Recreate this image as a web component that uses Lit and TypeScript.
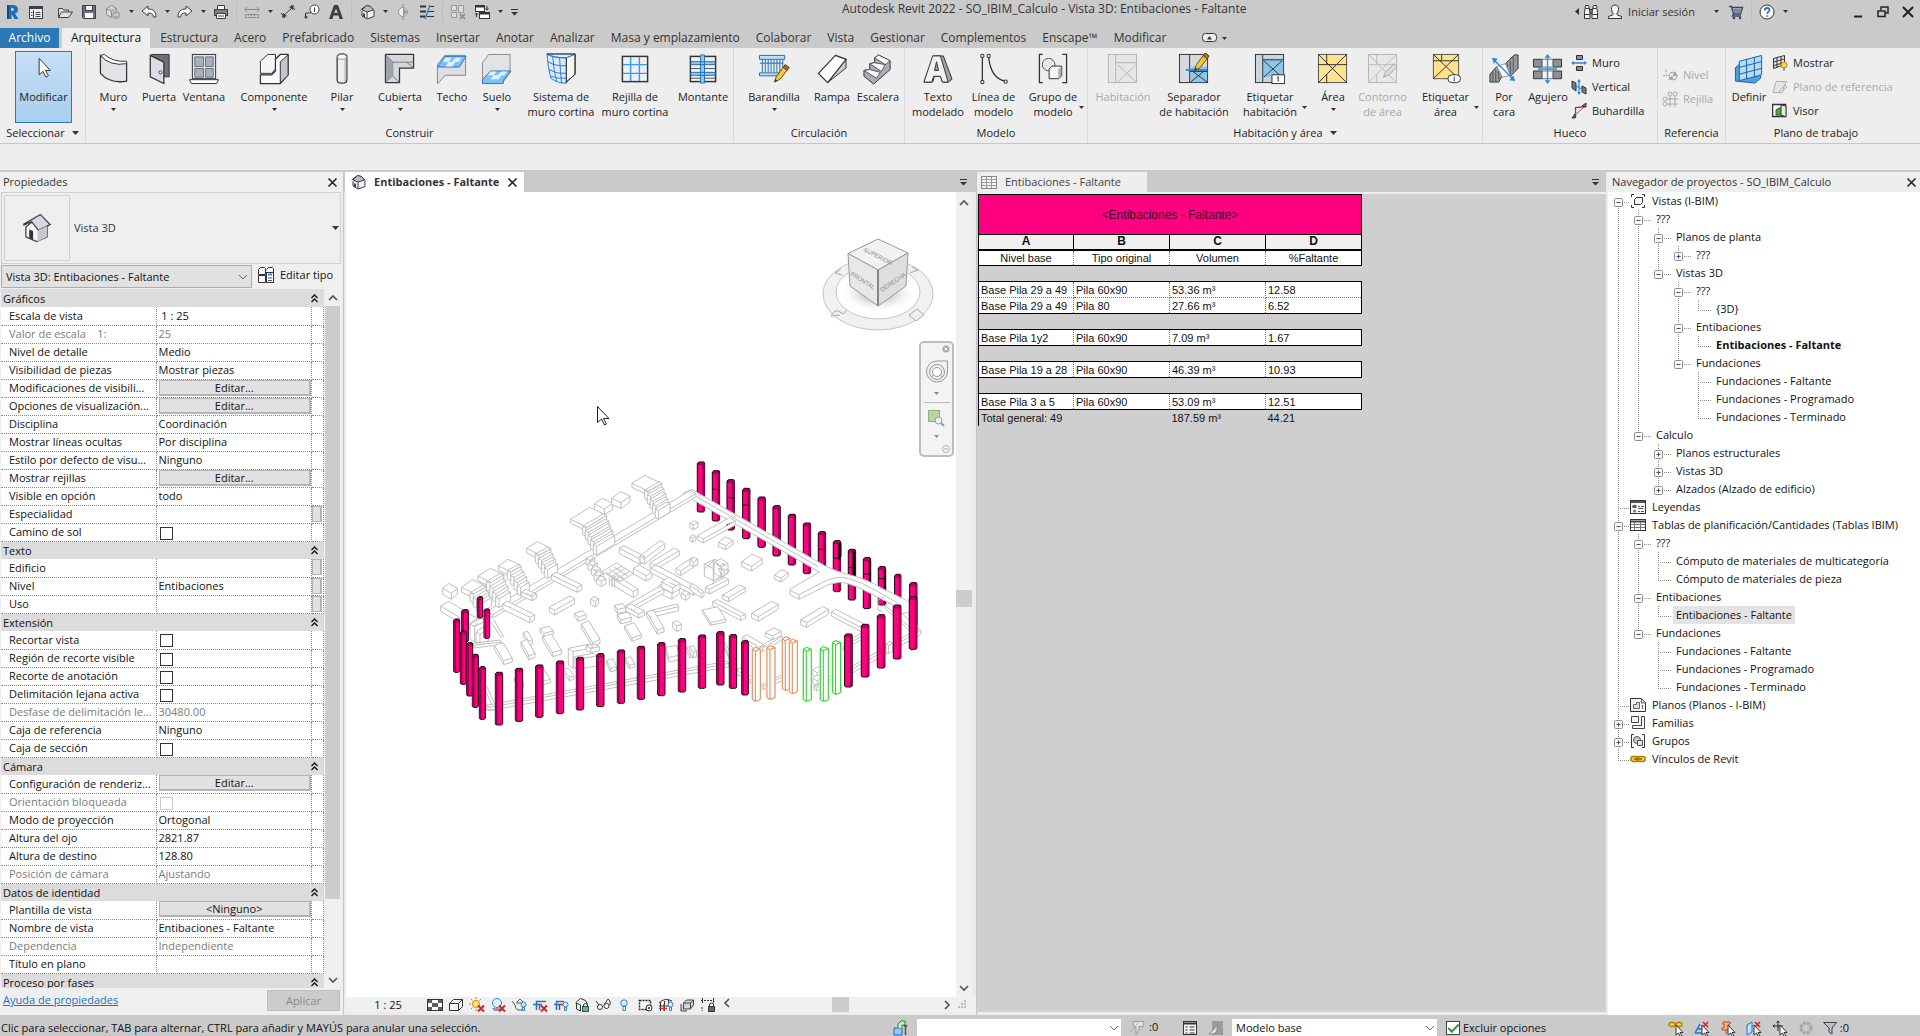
import { LitElement, html, svg, css, nothing, SVGTemplateResult } from "lit";
import { customElement, state } from "lit/decorators.js";
import { classMap } from "lit/directives/class-map.js";

type Art = SVGTemplateResult;

/* ---------- shared drawing pieces ---------- */

const pencil = svg`<path d="M17 30l2-6 9-12 4 3-9 12z" fill="#f7c832" stroke="#5c4a1c"/><path d="M26 15l2-3 4 3-2 3z" fill="#b9633f" stroke="#5c4a1c"/><path d="M17 30l1-3 2 2z" fill="#333"/>`;
const roomBox = (fill: string, line: string) => svg`<rect x="1.500" y="1.500" width="29" height="29" fill="${fill}" stroke="${line}"/>`;
const redX = svg`<path d="M9 8.500l6 6m0-6l-6 6" stroke="#d3222a" stroke-width="2" fill="none"/>`;
const pointer = svg`<path d="M8 5v10l2.500-2 2 4 1.500-1-2-3.500h3z" fill="#fff" stroke="#333"/>`;
const bulb = svg`<circle cx="12.500" cy="7.500" r="2.500" fill="#d9efff" stroke="#2482cf"/><path d="M11.500 10.500h2v3h-2z" fill="#fff" stroke="#2482cf"/>`;
const areaLines = (c: string) => svg`<path d="M1 12h30M10 1v11M1 1l30 30M31 1L1 31M10 31v-9" stroke="${c}" fill="none"/>`;

const ART: Record<string, Art> = {
  logo: svg`<path d="M3 1h6q5 0 5 4.500 0 3-3 4l3.500 5.500h-4L7.500 10v5H3z" fill="#1c6fb8"/><path d="M7 4h1.500q1.500 0 1.500 1.500T8.500 7H7z" fill="#cacaca"/><path d="M3 1l2 1v12l-2 1z" fill="#0d4a86"/>`,
  recent: svg`<rect x="1.500" y="2.500" width="13" height="12" fill="#f4f4f4" stroke="#3c4046"/><path d="M2 4h12" stroke="#3c4046" stroke-width="2"/><path d="M5.500 6v8M7.500 8.500h5M7.500 10.500h5M7.500 12.500h5M3 8.500h1.500M3 11.500h1.500" stroke="#3c4046"/>`,
  open: svg`<path d="M1.500 13.500v-9h4l1 1.500h5v2M1.500 13.500l3-5.500h11l-4 5.500z" fill="#e4e4e6" stroke="#3c4046"/>`,
  save: svg`<path d="M1.500 1.500h13v13h-12l-1-1z" fill="#6c7078" stroke="#3c4046"/><rect x="4.500" y="1.500" width="7" height="5" fill="#f3f3f3" stroke="#3c4046"/><rect x="4" y="9" width="8" height="5" fill="#fafafa"/>`,
  sync: svg`<path d="M1.500 4.500l5-3 5 3v6l-5 3-5-3zM1.500 4.500l5 3 5-3M6.500 7.500v6" fill="#dadada" stroke="#8a8a8a"/><circle cx="11" cy="11" r="4" fill="#a9a9a9"/><path d="M9 11h4m-1.500-1.500L13 11" stroke="#eee" fill="none"/>`,
  undo: svg`<path d="M1 7l6-5v3c5 0 8 2 8 8h-2.500c-.5-3-2-4-5.500-4v3z" fill="#f6f6f6" stroke="#3c4046"/>`,
  redo: svg`<path d="M15 7L9 2v3C4 5 1 7 1 13h2.500c.5-3 2-4 5.500-4v3z" fill="#f6f6f6" stroke="#3c4046"/>`,
  print: svg`<path d="M4.500 6V1.500h7V6" fill="#fff" stroke="#3c4046"/><rect x="1.500" y="5.500" width="13" height="6" fill="#7b8088" stroke="#3c4046"/><path d="M3.500 9.500h9v5h-9z" fill="#fff" stroke="#3c4046"/><path d="M5 12h6" stroke="#3c4046"/>`,
  measure: svg`<path d="M1 5.500h14M3 3L1 5.500 3 8M13 3l2 2.500L13 8M1.500 10.500h13v3h-13zM4.500 10v2M7.500 10v2M10.500 10v2" stroke="#8d8d8d" fill="none"/>`,
  dim: svg`<path d="M3 12L13 3M1 9l4 5M11 1l4 5" stroke="#3c4046" fill="none"/><path d="M2 14l1-5 4 3zM14 1l-5 2 4 3z" fill="#3c4046"/>`,
  tag: svg`<circle cx="10.500" cy="5.500" r="4.500" fill="#fff" stroke="#3c4046"/><path d="M10.500 3.500v4.500M1.500 14v-5h4l2-1" stroke="#3c4046" fill="none"/><circle cx="2" cy="13" r="1.500" fill="#3c4046"/>`,
  textA: svg`<path fill-rule="evenodd" d="M6 1h4l5 14h-3.500l-1-3.500h-5L4.500 15H1zM8 4.500L6.300 9h3.400z" fill="#3c4046"/>`,
  house: svg`<path d="M1.500 6l6-4.500 4 1 3.500 4v6l-7 2.500-5-3V7" fill="#f3f3f6" stroke="#3c4046"/><path d="M7.500 1.500L3 6l5 2 6.500-2-3-3.500zM8 8v6.500" fill="#b9bcc4" stroke="#3c4046"/><path d="M4 9l2 1v3.500L4 12.500z" fill="#3c4046"/>`,
  section: svg`<circle cx="8" cy="8" r="4.500" fill="#eee" stroke="#999"/><path d="M8 0v3M8 13v3" stroke="#888"/><path d="M8 3.500L12.500 8 8 12.500z" fill="#999"/>`,
  thin: svg`<path d="M1 2.500h6M1 7.500h6M1 12.500h6" stroke="#333" stroke-width="2"/><path d="M10 2.500h5M9 7.500h6M8 12.500h7" stroke="#333"/><path d="M11 1L6 15" stroke="#2b8ae2" stroke-width="1.500"/>`,
  closeWin: svg`<path d="M1.500 1.500h5v5h-5zM8.500 1.500h5v7h-5zM1.500 8.500h5v5h-5z" fill="#ddd" stroke="#999"/><path d="M10 10l5 5m0-5l-5 5" stroke="#888" stroke-width="1.500"/>`,
  switchWin: svg`<rect x="1.500" y="1.500" width="9" height="6" fill="#fff" stroke="#333"/><path d="M2 2.500h8" stroke="#333" stroke-width="2"/><rect x="5.500" y="8.500" width="10" height="6" fill="#fff" stroke="#333"/><path d="M6 9.500h9" stroke="#333" stroke-width="2"/><path d="M13 2v4m-1.500-1.500L13 6l1.500-1.500M2.500 13V9M1 10.500L2.500 9 4 10.500" stroke="#333" fill="none"/>`,
  binoc: svg`<path d="M2.500 1.500h3l1.500 6v7H1.500v-6zM10.500 1.500h3l1 7v6H9v-7zM7 5.500h2v4H7z" fill="#f4f4f4" stroke="#333"/><path d="M2 10.500h4.500M9.500 10.500h4.500M3 4.500h3M10 4.500h3" stroke="#333"/>`,
  user: svg`<path d="M8 1q4 0 3.500 4.500Q11 9 9.500 10q0 1 5 2.500v2h-13v-2q5-1.500 5-2.500Q5 9 4.500 5.500 4 1 8 1z" fill="#f6f6f6" stroke="#333"/>`,
  cart: svg`<path d="M1 2.500h2.500L5.500 10h7l2-6.500H4M5.500 10l-1 2h8.500" stroke="#3b4660" fill="none" stroke-width="1.400"/><path d="M5 5h8.500l-1 4H6z" fill="#7f8aa5"/><circle cx="6" cy="14" r="1.300" fill="#3b4660"/><circle cx="12" cy="14" r="1.300" fill="#3b4660"/>`,
  help: svg`<circle cx="8" cy="8" r="7" fill="#fff" stroke="#333"/><path d="M5.700 6.500Q6 4 8.200 4q2.300 0 2.300 2 0 1.200-1.300 2-.9.500-.9 1.700M8.300 11.200v1.600" stroke="#2373c8" stroke-width="1.800" fill="none"/>`,

  cursor: svg`<path d="M11.500 6.500v17l4-3.500 3 6 2.500-1.500-3-5.500h5z" fill="#fff" stroke="#333"/>`,
  wall: svg`<path d="M2.500 2.500q11 10 23 8h4v18.500q-17 3-27-8z" fill="#e4e4e8" stroke="#333" stroke-width="1.300"/><path d="M2.500 2.500l4-1q9 8 23 7v2.500q-17 3-27-8.500z" fill="#fff" stroke="#333"/>`,
  door: svg`<path d="M9 1.500h18v23h-6M9 24V1" fill="#6b7078" stroke="#333"/><path d="M7.500 2.500l14 7v22l-14-7z" fill="#dcdee3" stroke="#333" stroke-width="1.300"/><circle cx="18" cy="20" r="1.600" fill="#fff" stroke="#333"/>`,
  window: svg`<rect x="4.500" y="1.500" width="24" height="25" fill="#e7e7ea" stroke="#333"/><path d="M7 4h9v10H7zM18 4h8v10h-8zM7 16h9v9H7zM18 16h8v9h-8z" fill="#a9b0bc" stroke="#6c7079"/><path d="M1.500 27.500h30l-2 4h-26z" fill="#fff" stroke="#333"/>`,
  component: svg`<path d="M2.500 8.500L10 1.500h8v15l-4 4.500H2.500z" fill="#f5f5f7" stroke="#333"/><path d="M18 6.500l5-5h8v21l-8 9H2.500v-9H14l4-4z" fill="#fbfbfc" stroke="#333" stroke-width="1.300"/><path d="M23 9l8-7v21l-8 8z" fill="#c3c5cb" stroke="#333"/>`,
  column: svg`<path d="M11.500 4q0-3 5-3t5 3v24q0 3-5 3t-5-3z" fill="#eeeef1" stroke="#333" stroke-width="1.300"/><path d="M19 5v25q2-1 2-3V4z" fill="#b9bcc4"/><ellipse cx="16.500" cy="4" rx="4.500" ry="2.500" fill="#fff" stroke="#999"/>`,
  roof: svg`<path d="M1.500 1.500h29v14H16v15H1.500z" fill="#d5d7dc" stroke="#333" stroke-width="1.300"/><path d="M1.500 1.500l8 8h21M9 9.500v14l-7.500 7M30.500 15.500l-7-6M9 23.500l7 7" stroke="#777" fill="none"/><path d="M2 2l7 7.500V24l-7 6z" fill="#9fa3ac"/>`,
  ceiling: svg`<path d="M1.500 12v20l8-9 21 0V2.500H9z" fill="#dedfe2" stroke="#888"/><path d="M1.500 14.500L9 3.500h22L24 14.500z" fill="#7fc0f5" stroke="#2d78c8"/><path d="M10 5h6l-3 4H7zM20 5h6l-2 4h-7zM13 9h7l-3 5h-7z" fill="#dff0ff"/>`,
  floor: svg`<path d="M1.500 10L8 1.500h22V20L22 31H1.500z" fill="#e2e3e6" stroke="#888"/><path d="M1.500 27.500L10 18.500h21L23 28v3.500H1.500z" fill="#7fc0f5" stroke="#2d78c8"/><path d="M10 19h6l-3 4H7zM21 19h6l-3 4h-7zM13 23h8l-3 4h-8z" fill="#dff0ff"/>`,
  curtain: svg`<path d="M22 5l9-4v21l-9 8z" fill="#f5f5f5" stroke="#333"/><path d="M2 1h29l-9 4Q8 5 2 1zM2 1q1 14 4 25 8 6 16 5V5Q8 5 2 1z" fill="#d8ecfd" stroke="#2d78c8"/><path d="M3 9q8 5 19 4M4 17q8 5 18 4M6 24q8 3 16 2M8 4q1 15 4 25M15 5q1 15 2 26" stroke="#2d78c8" fill="none"/><path d="M2 1h29M31 1v21l-9 8M22 5v26" stroke="#333" fill="none"/>`,
  grid: svg`<rect x="3.500" y="3.500" width="26" height="26" fill="#eef0f3" stroke="#333" stroke-width="1.500"/><path d="M12 4v25M21 4v25M4 12h25M4 21h25" stroke="#3b9bf0" stroke-width="1.500"/>`,
  mullion: svg`<rect x="3.500" y="3.500" width="26" height="26" fill="#eef0f3" stroke="#333" stroke-width="1.500"/><path d="M4 9h25v3H4zM4 20h25v3H4zM14 2h4v29h-4z" fill="#8fcbf7" stroke="#1f6db8"/><path d="M4 16h10M18 16h11M4 26h10M18 26h11" stroke="#555"/>`,
  railing: svg`<path d="M1.500 2.500h26v4h-26zM1.500 20.500h23v3h-23z" fill="#bfe0fa" stroke="#1f6db8"/><path d="M4.500 7v13M7.500 7v13M10.500 7v13M13.500 7v13M16.500 7v13M19.500 7v13M22.500 7v13M25.500 7v8M2 10.500h24" stroke="#1f6db8"/>${pencil}`,
  ramp: svg`<path d="M20 2.500l11 4v9L12 30.500z" fill="#c9cbd1" stroke="#333"/><path d="M20 2.500l11 4L12 30.500 2.500 21z" fill="#fdfdfd" stroke="#333" stroke-width="1.300"/>`,
  stair: svg`<path d="M17 2l-4 3v5l-5 1v6l-6 1v6l10 8 17-15V8z" fill="#a9adb5" stroke="#333"/><path d="M17 2l12 6-5 4-11-7zM13 10l11 2-4 7-12-8zM8 17l11 3-4 6-13-8z" fill="#f7f7f8" stroke="#555"/>`,
  modelText: svg`<path fill-rule="evenodd" d="M12 3h10l9 24-4 3h-6l-2-6h-6l-2 6H2z" fill="#9fa3ab" stroke="#333"/><path fill-rule="evenodd" d="M11 3h8l8 27h-6l-2-6h-7l-2 6H2zM15 9l-2 9h4z" fill="#f1f1f3" stroke="#333"/>`,
  modelLine: svg`<path d="M4.500 4v25M11 4q2 22 17 25" stroke="#333" fill="none" stroke-width="1.300"/><path d="M3 1.500h3v3H3zM3 28.500h3v3H3zM9.500 1.500h3v3h-3zM27 28h3v3h-3z" fill="#fff" stroke="#333"/>`,
  modelGroup: svg`<path d="M6 1.500H2.500v29H6M26 1.500h4.500v29H26" stroke="#333" fill="none" stroke-width="1.300"/><circle cx="12" cy="12" r="6.500" fill="#e6e7ea" stroke="#555"/><path d="M12.500 16.500l3-3h10v10l-3 3h-10z" fill="#f6f6f7" stroke="#333"/><path d="M22 17l3-3v9l-3 3z" fill="#a9adb5"/>`,
  room: svg`${roomBox("#e6e6e6", "#b3b3b3")}<path d="M9 2v29M9 10h21M11 12l19 18M30 12L11 30" stroke="#b3b3b3" fill="none"/>`,
  roomSep: svg`${roomBox("#d5dae1", "#333")}<path d="M13 14h17v16H13z" fill="#8cc6ea"/><path d="M12 2v28M12 19h18M13 30l16-13M14 18l16 12" stroke="#333"/><path d="M8 17.500h22" stroke="#2b8ae2" stroke-width="2"/><g transform="translate(0 -12)">${pencil}</g>`,
  roomTag: svg`${roomBox("#cbd5de", "#333")}<path d="M9 6h21v19H9z" fill="#8cc6ea"/><path d="M9 2v28M9 7h21M10 8l19 17M29 8L10 25" stroke="#333"/><rect x="18.500" y="22.500" width="13" height="9" fill="#fff" stroke="#333"/><path d="M25 24.500v5M23.500 25.500l1.500-1" stroke="#333"/>`,
  area: svg`${roomBox("#ffe28c", "#555")}${areaLines("#333")}`,
  areaOff: svg`${roomBox("#e8e8e8", "#b3b3b3")}${areaLines("#bbb")}<path d="M17 25l2-5 9-9 3 3-9 9z" fill="#ddd" stroke="#a5a5a5"/>`,
  areaTag: svg`<rect x="3.500" y="1.500" width="26" height="25" fill="#ffe28c" stroke="#555"/><path d="M3 8h26M12 2v6M4 2l25 24M29 2L4 26" stroke="#333"/><rect x="18.500" y="22.500" width="13" height="8" rx="4" fill="#fff" stroke="#333"/><path d="M25 24.500v4.500" stroke="#333"/>`,
  byFace: svg`<path d="M18 11L27 2h4v14l-8 8zM2 22l7-8 7 7-5 9H2z" fill="#9599a1" stroke="#333"/><path d="M20 11v11M23 8v14M26 4v15M5 20v9M8 17v12M11 18v9" stroke="#555"/><path d="M9 14l9-3 5 12-8 2z" fill="#fff" stroke="#999"/><path d="M6 7l20 20" stroke="#2b8ae2" stroke-width="1.500"/><path d="M4 5l6 1-4 5zM28 29l-6-1 4-5z" fill="#2b8ae2"/>`,
  shaft: svg`<path d="M1.500 6.500h9v8h-9zM21.500 6.500h9v8h-9zM1.500 18.500h9v8h-9zM21.500 18.500h9v8h-9z" fill="#8c9097" stroke="#333"/><path d="M10.500 6.500h11v8h-11zM10.500 18.500h11v8h-11z" fill="#f5f5f5" stroke="#777"/><path d="M16 4v25M6 16.500h20" stroke="#2b8ae2" stroke-width="1.300"/><path d="M16 1l3 4h-6zM16 32l3-4h-6z" fill="#2b8ae2"/>`,
  wallOpening: svg`<path d="M5.500.5h6v4h-6zM5.500 11.500h6v4h-6z" fill="#8c9097" stroke="#333"/><path d="M1 8h14" stroke="#2b8ae2" stroke-width="1.500"/><path d="M0 8l3-2v4zM16 8l-3-2v4z" fill="#2b8ae2"/>`,
  vertical: svg`<path d="M1 2l4 2v8l-4-3zM11 7l4 2v6l-4-2z" fill="#777b82" stroke="#333"/><path d="M8 2v12M5 7l6 3" stroke="#2b8ae2" stroke-width="1.300"/><path d="M8 0l2 3H6zM8 16l2-3H6z" fill="#2b8ae2"/>`,
  dormer: svg`<path d="M4.500 15V4.500L15 3.500" stroke="#d3222a" stroke-width="1.300" fill="none"/><path d="M1 15l3-4v4zM11 3l4-3v4z" fill="#777b82" stroke="#333"/><path d="M4 12l9-8" stroke="#666"/>`,
  level: svg`<path d="M1 8.500h5M4 3v4M3 4l1-1M14 8.500h2" stroke="#aaa" stroke-dasharray="2 1"/><circle cx="11" cy="9" r="4" fill="#eee" stroke="#aaa"/><path d="M11 5v8H7q0-4 4-4h4q0-4-4-4z" fill="#aaa"/>`,
  axis: svg`<circle cx="3" cy="8" r="2" fill="none" stroke="#aaa"/><circle cx="3" cy="13" r="2" fill="none" stroke="#aaa"/><circle cx="8" cy="3" r="2" fill="none" stroke="#aaa"/><circle cx="13" cy="3" r="2" fill="none" stroke="#aaa"/><path d="M8 5v11M13 5v11M5 8h11M5 13h11" stroke="#aaa"/>`,
  setPlane: svg`<path d="M2.500 15l5-4 21-5v20l-6 5-20-2z" fill="#4f9fdc" stroke="#1f5f9f"/><path d="M6.500 8.500l23-6v20l-23 6z" fill="#b5dcf7" stroke="#1f5f9f"/><path d="M14 6.500v20M22 4.500v20M6 15l23-6M6 22l23-6" stroke="#1f5f9f"/>`,
  showPlane: svg`<path d="M1.500 3.500l11-3v9l-11 4zM5 2.500v10M9 1.500v9M2 7l10-3M2 10.500l10-3" fill="#e8e8ec" stroke="#333"/><circle cx="12" cy="10" r="3" fill="#ffd34d" stroke="#b8860b"/><path d="M11 13h2v2.500h-2z" fill="#888"/>`,
  refPlane: svg`<path d="M4 2.500h11M4 2.500l-3 11h9l4-11M7 14l1-3 5-5 2 2-5 5z" stroke="#b0b0b0" fill="#e5e5e5"/>`,
  viewer: svg`<rect x=".5" y="1.500" width="13" height="12" fill="#fff" stroke="#333" stroke-width="1.500"/><path d="M4 12V7l3-2h4v7z" fill="#58a34f" stroke="#2c5d27"/><path d="M9 2l5 1v11l-5-2z" fill="#e8e8e8" stroke="#333"/>`,

  bigHouse: svg`<path d="M5 15.500v10l11 5 11-5V12.500L20 3.500z" fill="#f7f7f9" stroke="#3c4046" stroke-width="1.300"/><path d="M3 12.500L20 2.500l10 10.500-12 6-7-9-8 3.500z" fill="#d6d8de" stroke="#3c4046" stroke-width="1.300"/><path d="M17 19v11.500l10-5V14.500z" fill="#c6c9d0"/><path d="M8.500 18l4 1.500v9l-4-2z" fill="#2f333a"/>`,
  editType: svg`<path d="M1.500 3.500l2-2h4l1 1v6h-7zM9.500 3.500l2-2h4l1 1v6M1.500 9.500h7v7h-7z" fill="#f6f6f6" stroke="#333"/><rect x="9.500" y="6.500" width="7" height="10" fill="#fff" stroke="#333"/><path d="M11 8.500h4" stroke="#2b8ae2" stroke-width="2"/><path d="M11 12h4M11 14.500h4" stroke="#555"/>`,
  sheetTable: svg`<rect x=".5" y="2.500" width="15" height="12" fill="#f4f4f4" stroke="#888"/><path d="M1 5.500h14M1 8.500h14M1 11.500h14M5.500 3v11M10.500 3v11" stroke="#999"/>`,
  views: svg`<path d="M4 1.500H1.500V4M12 1.500h2.500V4M4 14.500H1.500V12M12 14.500h2.500V12" stroke="#333" fill="none"/><path d="M4.500 6.500l2-2h6v5l-2 2h-6z" fill="#f4f4f4" stroke="#333"/>`,
  legend: svg`<rect x=".5" y="1.500" width="15" height="13" fill="#f6f6f6" stroke="#333"/><path d="M1 3h14" stroke="#555" stroke-width="2"/><path d="M2.500 6h4v3h-4z" fill="#555"/><circle cx="4.500" cy="12" r="1.500" fill="#777"/><path d="M8 7.500h2M11 7.500h3M8 9.500h5M8 12.500h2M11 12.500h3" stroke="#555"/>`,
  schedule: svg`<rect x=".5" y="2.500" width="15" height="11" fill="#fff" stroke="#333"/><path d="M1 4.500h14" stroke="#444" stroke-width="2"/><path d="M1 7.500h14M1 10.500h14M4.500 5v8M10.500 5v8" stroke="#777"/>`,
  sheets: svg`<path d="M.5 1.500h11l4 4v9H.5z" fill="#f4f4f4" stroke="#333"/><path d="M3.500 11.500v-4h3v-2h3v6zM11.500 2v4h4M12.500 12V8" stroke="#666" fill="#ddd"/>`,
  families: svg`<path d="M1.500 1.500h7v6h-7zM11.500 1.500h3v12h-12v-3h9z" fill="#f4f4f4" stroke="#444"/>`,
  groups: svg`<path d="M4 1.500H1.500v13H4M12 1.500h2.500v13H12" stroke="#333" fill="none"/><circle cx="7" cy="7" r="3.500" fill="#c9cbd0" stroke="#555"/><path d="M7.500 7.500h5v5h-5z" fill="#e3e4e7" stroke="#555"/>`,
  links: svg`<rect x=".8" y="5.500" width="8" height="5" rx="2.500" fill="#ffd23f" stroke="#b37a00" stroke-width="1.400"/><rect x="7.200" y="5.500" width="8" height="5" rx="2.500" fill="#ffd23f" stroke="#b37a00" stroke-width="1.400"/><path d="M4 8h8" stroke="#8a5c00" stroke-width="1.500"/>`,

  detail: svg`<rect x=".5" y="2.500" width="15" height="11" fill="#fff" stroke="#333"/><path d="M1 3h4v3H1zM11 3h4v3h-4zM5 6h6v4H5zM1 10h4v3H1zM11 10h4v3h-4z" fill="#5a5f67"/>`,
  shade: svg`<path d="M1.500 6.500l4-4h9v7l-4 4h-9zM1.500 6.500h9v7M10.500 6.500l4-4" fill="#f7f7f7" stroke="#333"/>`,
  sun: svg`<circle cx="7" cy="7" r="3.500" fill="#ffe27a" stroke="#d08a00"/><path d="M7 0v2M7 12v2M0 7h2M2 2l1.500 1.500M12 2l-1.500 1.500M2 12l1.500-1.500" stroke="#d08a00"/>${redX}`,
  shadow: svg`<circle cx="7" cy="6" r="4.500" fill="#dff0ff" stroke="#2b8ae2"/><path d="M2 11h8l2 3H4z" fill="#999"/>${redX}`,
  teapot: svg`<path d="M1 4l3 4q0 4 3 5h4l2-7H5M6 5l3-3 3 3" fill="#eee" stroke="#555"/>${bulb}`,
  crop: svg`<path d="M4.500 13V4.500H14M1 7.500h9M7.500 13V7" stroke="#2373c8" stroke-width="1.500" fill="none"/>${redX}`,
  cropShow: svg`<path d="M3.500 13V4.500H11M1 7.500h5" stroke="#2373c8" stroke-width="1.500" fill="none"/><path d="M6.500 7v6M6 7.500h4" stroke="#d3222a" stroke-width="1.500"/>${bulb}`,
  lock3d: svg`<path d="M1.500 6l5-4.500 5 2 2 4M2.500 6v6l4 2V8L2 6" fill="#eee" stroke="#333"/><rect x="8.500" y="9.500" width="6" height="5" fill="#7fa88f" stroke="#2f5a44"/><path d="M9.500 9.500v-2q2-2 4 0v2" stroke="#333" fill="none"/>`,
  glasses: svg`<path d="M1 4l3 4M9 8l4-6 2 2v4" stroke="#333" fill="none"/><circle cx="5" cy="10" r="2.500" fill="#fff" stroke="#333"/><circle cx="11.500" cy="9" r="2.500" fill="#fff" stroke="#333"/>`,
  bulbOnly: svg`<circle cx="8" cy="6" r="3.200" fill="#d9efff" stroke="#2482cf"/><path d="M7 9.500h2.500v4H7z" fill="#fff" stroke="#2482cf"/>`,
  tempView: svg`<rect x="2.500" y="3.500" width="11" height="9" fill="#f7f7f7" stroke="#222" stroke-dasharray="2 1" stroke-width="1.500"/><circle cx="12" cy="11" r="3" fill="#fff" stroke="#222"/><circle cx="12" cy="11" r="1" fill="#222"/>`,
  analytic: svg`<path d="M1 6q6-6 13-2M1 9h10M2.500 5v9M6.500 4v10M10.500 3v6" stroke="#333" fill="none"/><path d="M1 11.500h8M6 7v7" stroke="#c33" stroke-width="1.300"/>${bulb}`,
  displace: svg`<path d="M4.500 6l3-3h7v5l-3 4h-7zM4.500 6h7v6M11.500 6l3-3M2 7v7h6" fill="#d5d6da" stroke="#444"/>`,
  constraints: svg`<path d="M1 3.500h13M2.500 1v5M13.500 1v5M2 10v4" stroke="#333" stroke-dasharray="2 1"/><path d="M8.500 9.500h6v5h-6z" fill="#666" stroke="#333"/><path d="M9.500 9V7q2-2 4 0v2" stroke="#333" fill="none"/>`,

  workset: svg`<path d="M1 8h8v7H1z" fill="#8fcaf2" stroke="#1f6db8"/><path d="M5 8V4l3-3h4v4H9v3" fill="#cbeebf" stroke="#34802a"/><path d="M12.500 5v10M11 5q1.500 3 3 0" stroke="#4b5560" stroke-width="1.500" fill="none"/>`,
  filterOff: svg`<path d="M3 1.500h11l-1 5H9v3l-3 5V7H4z" fill="#e3e3e3" stroke="#999"/><path d="M1 12l7-9" stroke="#aaa"/>`,
  options: svg`<rect x="1.500" y="1.500" width="13" height="13" fill="#f4f4f4" stroke="#333"/><path d="M2 3.500h12" stroke="#333" stroke-width="2"/><path d="M3.500 7h2M3.500 10h2M3.500 13h2M7.500 7h5M7.500 10h5M7.500 13h5" stroke="#333"/>`,
  pick: svg`<rect x="4" y="1" width="11" height="14" fill="#9a9a9a"/><path d="M1 14h5l3-3V5l-3 4z" fill="#ddd" stroke="#888"/>`,
  selLinks: svg`<rect x="1" y="2.500" width="6" height="4" rx="2" fill="#ffd23f" stroke="#b37a00" stroke-width="1.300"/><rect x="8" y="2.500" width="6" height="4" rx="2" fill="#ffd23f" stroke="#b37a00" stroke-width="1.300"/>${pointer}`,
  selUnder: svg`<path d="M1 13L6 4M1 13h10M4 9h8" stroke="#2373c8" stroke-width="1.500" fill="none"/><path d="M9 2l5 5m0-5L9 7" stroke="#d3222a" stroke-width="1.600"/>${pointer}`,
  selPin: svg`<path d="M3 2h7v2H9v4h2v2H2V8h2V4H3zM6 10v4" fill="#f4b183" stroke="#b5521b"/>${pointer}`,
  selFace: svg`<path d="M1 5l5-3v10l-5 3z" fill="#bfe0fa" stroke="#2373c8"/><path d="M9 2l5 5m0-5L9 7" stroke="#d3222a" stroke-width="1.600"/>${pointer}`,
  selDrag: svg`<path d="M6 1v10M1 6h10M4.500 2.500L6 1l1.500 1.500M2.500 4.500L1 6l1.500 1.500" stroke="#222" fill="none"/>${pointer}`,
  background: svg`<circle cx="8" cy="8" r="5" fill="none" stroke="#a5a5a5" stroke-width="3" stroke-dasharray="3 1"/>`,
  filter: svg`<path d="M1.500 2.500h13L10 8v6l-3-2V8z" fill="#b9c2cf" stroke="#3c4046"/>`,
};

const icon = (name: string, size = 16) =>
  html`<svg class="ic" width=${size} height=${size} viewBox=${size > 20 ? "0 0 33 33" : size === 18 ? "0 0 18 18" : "0 0 16 16"} aria-hidden="true" fill="none">${ART[name]}</svg>`;
const arrow = html`<svg class="ic" width="7" height="4" viewBox="0 0 7 4" aria-hidden="true"><path d="M0 0h7L3.500 4z" fill="#333" /></svg>`;
const smallArrow = html`<svg class="ic" width="5" height="3" viewBox="0 0 5 3" aria-hidden="true"><path d="M0 0h5L2.500 3z" fill="#333" /></svg>`;
const chevron = (dir: "up" | "down" | "left" | "right") => {
  const d = { up: "M2 8l4-4 4 4", down: "M2 4l4 4 4-4", left: "M8 2L4 6l4 4", right: "M4 2l4 4-4 4" }[dir];
  return html`<svg class="ic" width="12" height="12" viewBox="0 0 12 12" aria-hidden="true"><path d=${d} fill="none" stroke="#555" stroke-width="1.700" /></svg>`;
};
const thinChevron = html`<svg class="ic" width="12" height="12" viewBox="0 0 12 12" aria-hidden="true"><path d="M2 4l4 4 4-4" fill="none" stroke="#666" /></svg>`;
const cross = html`<svg class="ic" width="11" height="11" viewBox="0 0 11 11" aria-hidden="true"><path d="M1.500 1.500l8 8m0-8l-8 8" stroke="#222" stroke-width="1.600" /></svg>`;
const tabMenu = html`<svg class="ic" width="9" height="8" viewBox="0 0 9 8" aria-hidden="true"><path d="M1 1.500h7" stroke="#333" /><path d="M1 4h7L4.500 7.500z" fill="#333" /></svg>`;

const base = css`
  * { box-sizing: border-box; }
  button, select, input { font: inherit; color: inherit; margin: 0; }
  button { border: 0; padding: 0; background: none; display: inline-flex; align-items: center; justify-content: center; white-space: nowrap; }
  a { color: inherit; text-decoration: none; }
  .ic { display: block; flex: none; }
  .grow { flex: 1; }
`;

/* ---------- properties palette ---------- */

type Kind = "text" | "edit" | "check" | "slot";
interface Prop { name: string; value?: string; kind?: Kind; off?: boolean; }

const GROUPS: { title: string; rows: Prop[] }[] = [
  { title: "Gráficos", rows: [
    { name: "Escala de vista", value: " 1 : 25" },
    { name: "Valor de escala    1:", value: "25", off: true },
    { name: "Nivel de detalle", value: "Medio" },
    { name: "Visibilidad de piezas", value: "Mostrar piezas" },
    { name: "Modificaciones de visibili...", value: "Editar...", kind: "edit" },
    { name: "Opciones de visualización...", value: "Editar...", kind: "edit" },
    { name: "Disciplina", value: "Coordinación" },
    { name: "Mostrar líneas ocultas", value: "Por disciplina" },
    { name: "Estilo por defecto de visu...", value: "Ninguno" },
    { name: "Mostrar rejillas", value: "Editar...", kind: "edit" },
    { name: "Visible en opción", value: "todo" },
    { name: "Especialidad", kind: "slot" },
    { name: "Camino de sol", kind: "check" },
  ] },
  { title: "Texto", rows: [
    { name: "Edificio", kind: "slot" },
    { name: "Nivel", value: "Entibaciones", kind: "slot" },
    { name: "Uso", kind: "slot" },
  ] },
  { title: "Extensión", rows: [
    { name: "Recortar vista", kind: "check" },
    { name: "Región de recorte visible", kind: "check" },
    { name: "Recorte de anotación", kind: "check" },
    { name: "Delimitación lejana activa", kind: "check" },
    { name: "Desfase de delimitación le...", value: "30480.00", off: true },
    { name: "Caja de referencia", value: "Ninguno" },
    { name: "Caja de sección", kind: "check" },
  ] },
  { title: "Cámara", rows: [
    { name: "Configuración de renderiz...", value: "Editar...", kind: "edit" },
    { name: "Orientación bloqueada", kind: "check", off: true },
    { name: "Modo de proyección", value: "Ortogonal" },
    { name: "Altura del ojo", value: "2821.87" },
    { name: "Altura de destino", value: "128.80" },
    { name: "Posición de cámara", value: "Ajustando", off: true },
  ] },
  { title: "Datos de identidad", rows: [
    { name: "Plantilla de vista", value: "<Ninguno>", kind: "edit" },
    { name: "Nombre de vista", value: "Entibaciones - Faltante" },
    { name: "Dependencia", value: "Independiente", off: true },
    { name: "Título en plano" },
  ] },
  { title: "Proceso por fases", rows: [] },
];

@customElement("property-palette")
class PropertyPalette extends LitElement {
  static styles = [base, css`
    :host { display: flex; flex-direction: column; min-height: 0; background: #efefef; border-right: 1px solid #c4c4c4; padding: 0 2px 0 1px; }
    .head { height: 20px; display: flex; align-items: center; justify-content: space-between; padding: 0 3px 0 2px; color: #333; }
    .type { height: 72px; display: flex; align-items: center; gap: 4px; border: 1px solid #d0d0d0; padding: 0 1px 0 2px; color: #333; }
    .preview { width: 66px; height: 66px; border: 1px solid #d0d0d0; display: flex; align-items: center; justify-content: center; }
    .pick { height: 25px; display: flex; align-items: flex-start; padding-top: 1px; gap: 5px; }
    .combo { position: relative; width: 251px; height: 23px; }
    .combo select { appearance: none; width: 100%; height: 100%; background: #e1e1e1; border: 1px solid #adadad; border-radius: 0; padding: 0 24px 0 4px; }
    .combo .ic { position: absolute; right: 3px; top: 6px; pointer-events: none; }
    .edit-type { height: 20px; gap: 5px; }
    .area { flex: 1; min-height: 0; overflow: hidden; display: flex; }
    .sheet { flex: 1; min-width: 0; overflow: hidden; }
    table { width: 100%; border-collapse: collapse; table-layout: fixed; background: #fff; }
    .c1 { width: 155px; } .c3 { width: 12px; }
    tr { height: 18px; }
    td, th { padding: 0 0 1px; height: 18px; line-height: 15px; border: 1px dotted #8a8a8a; border-width: 0 1px 1px 0; text-align: left; font-weight: normal; white-space: pre; overflow: hidden; }
    th.name { padding-left: 8px; }
    td.val { padding-left: 2px; }
    .group th { background: #dcdcdc; border: 0; padding: 0 6px 0 2px; }
    .bar { display: flex; align-items: center; justify-content: space-between; }
    .off { color: #7b7b7b; }
    .cell-button { display: flex; width: 100%; height: 16px; background: #e1e1e1; border: 1px solid #b4b4b4; border-width: 1px 2px 2px 1px; line-height: 13px; }
    .slot { width: 10px; height: 16px; display: block; background: #e1e1e1; border: 1px solid #b4b4b4; border-right-width: 2px; }
    input[type="checkbox"] { appearance: none; display: block; width: 13px; height: 13px; margin: 3px 0 0 1px; background: #fff; border: 1px solid #333; }
    input[type="checkbox"]:disabled { border-color: #ccc; }
    .scroll { width: 17px; background: #f0f0f0; display: flex; flex-direction: column; align-items: center; padding: 3px 1px 2px; gap: 2px; }
    .thumb { width: 15px; flex: 597; background: #cdcdcd; }
    .track { flex: 71; }
    .foot { height: 27px; display: flex; justify-content: space-between; align-items: flex-start; padding: 2px 1px 0 2px; }
    .foot a { color: #1a6fc4; text-decoration: underline; line-height: 20px; }
    .apply { width: 73px; height: 21px; background: #cccccc; border: 1px solid #bfbfbf; color: #8a8a8a; }
  `];

  private cell(p: Prop) {
    if (p.kind === "edit") return html`<button class="cell-button">${p.value}</button>`;
    if (p.kind === "check") return html`<input type="checkbox" aria-label=${p.name} ?disabled=${!!p.off} />`;
    return p.value ?? "";
  }

  render() {
    return html`
      <div class="head"><span>Propiedades</span><button aria-label="Cerrar propiedades">${cross}</button></div>
      <div class="type"><div class="preview">${icon("bigHouse", 32)}</div><span>Vista 3D</span><span class="grow"></span>${arrow}</div>
      <div class="pick">
        <div class="combo"><select aria-label="Filtro de propiedades"><option>Vista 3D: Entibaciones - Faltante</option></select>${thinChevron}</div>
        <button class="edit-type">${icon("editType", 18)}Editar tipo</button>
      </div>
      <div class="area">
        <div class="sheet">
          <table>
            <colgroup><col class="c1" /><col /><col class="c3" /></colgroup>
            ${GROUPS.map((g) => html`<tbody>
              <tr class="group"><th colspan="3"><div class="bar"><span>${g.title}</span><svg class="ic" width="7" height="9" viewBox="0 0 7 9" aria-hidden="true"><path d="M.5 4l3-3 3 3M.5 8l3-3 3 3" fill="none" stroke="#111" stroke-width="1.300" /></svg></div></th></tr>
              ${g.rows.map((p) => html`<tr class=${classMap({ off: !!p.off })}>
                <th class="name" scope="row">${p.name}</th>
                <td class="val">${this.cell(p)}</td>
                <td>${p.kind === "slot" ? html`<button class="slot" aria-label=${"Asociar " + p.name}></button>` : nothing}</td>
              </tr>`)}
            </tbody>`)}
          </table>
        </div>
        <div class="scroll">${chevron("up")}<div class="thumb"></div><div class="track"></div>${chevron("down")}</div>
      </div>
      <div class="foot"><a href="#ayuda">Ayuda de propiedades</a><button class="apply" disabled>Aplicar</button></div>
    `;
  }
}

/* ---------- 3D view ---------- */

/** A prism: left corner, two edge vectors of the top face, and a depth. */
type Slab = [number, number, number, number, number, number, number];

const stairs = (x: number, y: number, n: number, dx: number, dy: number, ax: number, ay: number): Slab[] =>
  Array.from({ length: n }, (_, i): Slab => [x + dx * i, y + dy * i, ax - i * 2, ay + i, 10, 5, 26]);

const RIGHT = 810;
const shift = (list: Slab[]): Slab[] => list.map(([x, ...r]) => [x + RIGHT, ...r] as Slab);

const SLABS: Slab[] = [
  [200, 515, 610, -363, 18, 9, 10],
  [636, 130, 38, -24, 50, 24, 12], ...stairs(674, 150, 5, 8, 14, 42, -24),
  [523, 192, 25, -17, 30, 15, 18], [575, 175, 27, -20, 28, 13, 18],
  [452, 238, 57, -36, 50, 24, 12], ...stairs(488, 258, 5, 8, 14, 62, -36),
  [320, 325, 32, -20, 40, 20, 14], ...stairs(346, 342, 4, 9, 14, 36, -20),
  [236, 378, 28, -20, 38, 18, 14], ...stairs(262, 392, 4, 10, 15, 32, -18),
  [174, 408, 38, -23, 40, 20, 14], ...stairs(200, 424, 4, 9, 16, 40, -24),
  [124, 442, 34, -23, 40, 20, 14], ...stairs(150, 458, 3, 10, 15, 38, -22),
  [68, 445, 18, -15, 26, 15, 18], [62, 498, 24, -14, 86, 52, 16],
  [150, 552, 34, -18, 14, 8, 46], [168, 575, 26, -16, 12, 8, 34],
  [158, 610, 82, -10, 4, 6, 8],
  [394, 405, 14, -8, 78, 38, 14], [248, 492, 14, -8, 82, 40, 16], [304, 456, 14, -8, 32, 14, 12],
  [388, 502, 60, -34, 16, 9, 14], [512, 478, 10, -8, 14, 6, 16],
  [598, 325, 14, -8, 62, 32, 16], [660, 348, 60, -46, 14, 8, 16],
  [640, 385, 18, -10, 38, 22, 16], [690, 368, 74, -44, 14, 8, 14], [768, 385, 50, -33, 14, 8, 14],
  [498, 355, 14, -8, 12, 8, 18], [504, 370, 14, -8, 14, 8, 18], [514, 386, 14, -8, 14, 8, 18], [522, 402, 14, -8, 14, 8, 18], [530, 416, 14, -8, 14, 8, 16],
  [576, 415, 14, -8, 64, 40, 18], [692, 384, 16, -9, 128, 68, 14],
  [714, 440, 22, -18, 42, 20, 18], [724, 426, 22, -14, 34, 18, 16],
  [620, 495, 98, -55, 14, 7, 12], [616, 500, 18, -8, 40, 22, 12], [690, 512, 82, -20, 4, 8, 12], [680, 516, 20, -6, 32, 54, 12],
  [783, 460, 12, -8, 14, 7, 14], [758, 548, 14, -6, 12, 10, 16],
  [464, 520, 24, -8, 10, 12, 12], [484, 552, 22, -10, 34, 56, 12],
  [584, 496, 25, -5, 8, 12, 12], [592, 524, 32, -8, 10, 16, 12], [614, 558, 28, -10, 22, 36, 10],
  [360, 566, 28, -7, 12, 14, 10], [368, 590, 26, -8, 30, 48, 12], [310, 578, 12, -5, 16, 26, 12], [303, 606, 18, -8, 24, 42, 12],
  [223, 616, 26, -8, 28, 46, 12], [445, 625, 60, -12, 14, 10, 50], [462, 650, 60, -10, 8, 8, 30], [498, 618, 26, -6, 14, 8, 12],
  [346, 692, 24, -6, 22, 32, 10], [430, 688, 14, -4, 18, 24, 10], [560, 662, 18, -6, 12, 24, 10], [284, 715, 14, -4, 14, 22, 8],
  [738, 622, 32, -6, 8, 30, 14], [616, 654, 16, -4, 12, 22, 10], [800, 622, 18, -4, 10, 20, 12],
  [200, 796, 720, -132, 8, 6, 10],
  ...shift([
    [0, 250, 14, -8, 10, 5, 14], [0, 290, 10, -6, 8, 5, 12], [22, 287, 96, -54, 18, 10, 12], [85, 307, 22, -16, 22, 10, 12],
    [155, 365, 32, -22, 30, 14, 14], [253, 405, 22, -16, 20, 9, 12], [98, 465, 50, -30, 18, 8, 12],
    [0, 360, 14, -8, 10, 6, 14], [43, 372, 32, -14, 28, 14, 36], [72, 368, 20, -12, 22, 14, 30], [46, 442, 58, -30, 12, 6, 14], [0, 436, 8, -5, 34, 24, 14],
    [68, 485, 14, -6, 84, 44, 12], [38, 510, 45, -10, 24, 38, 8], [185, 520, 60, -36, 20, 10, 14], [332, 540, 66, -40, 18, 8, 14],
    [424, 516, 14, -8, 96, 50, 12], [157, 592, 14, -8, 54, 32, 12], [210, 620, 58, -36, 8, 5, 10], [226, 578, 26, -14, 22, 10, 12],
    [0, 622, 10, -5, 10, 16, 16], [368, 690, 14, -10, 14, 8, 14], [368, 715, 14, -10, 14, 8, 14], [372, 738, 60, -34, 8, 5, 10],
    [452, 615, 60, -34, 8, 5, 10], [480, 682, 205, -116, 8, 5, 12], [586, 496, 14, -8, 84, 76, 10], [588, 612, 12, -8, 8, 5, 24], [100, 610, 6, -3, 40, 90, 8],
    [140, 690, 10, -6, 40, 30, 10], [215, 735, 80, -40, 6, 4, 10],
  ]),
];

const slabPath = ([x, y, ax, ay, bx, by, h]: Slab) =>
  `M${x} ${y}l${ax} ${ay}l${bx} ${by}v${h}l${-ax} ${-ay}l${-bx} ${-by}zM${x} ${y}l${bx} ${by}l${ax} ${ay}M${x + bx} ${y + by}v${h}`;

type Pile = [x: number, top: number, bottom: number, w?: number];
const BACK: Pile[] = [[22, 66, 216], [67, 92, 243], [111, 119, 270], [158, 145, 296], [204, 171, 322], [249, 197, 348], [295, 223, 375], [340, 249, 401], [385, 275, 384], [430, 302, 455], [475, 328, 480], [520, 353, 506], [565, 380, 495], [614, 403, 500, 19], [659, 428, 560]];
const LEFT: Pile[] = [[172, 470, 534, 16], [192, 507, 595, 17], [125, 509, 606, 20], [101, 537, 697, 18], [121, 573, 733, 18], [140, 608, 768, 18], [157, 643, 802, 18], [178, 680, 838, 18]];
const FRONT: Pile[] = [[226, 697, 855], [286, 685, 844], [347, 675, 832], [409, 663, 821], [469, 652, 810], [530, 641, 800], [592, 630, 790], [652, 619, 778], [713, 608, 767], [775, 596, 756],
  [835, 585, 745], [890, 575, 735], [928, 584, 745], [965, 602, 765, 20], [1274, 582, 741, 23], [1324, 553, 711, 23], [1372, 524, 684, 23], [1420, 495, 657, 23], [1468, 470, 628, 23]];
const ORANGE: Pile[] = [[997, 622, 783], [1041, 617, 777], [1087, 590, 750], [1108, 598, 760]];
const GREEN: Pile[] = [[1150, 622, 783], [1201, 620, 783], [1238, 602, 762]];

const solid = ([x, t, b, w = 22]: Pile, darkLeft: boolean) => {
  const s = 5;
  const side = darkLeft ? x : x + w - s;
  return svg`
    <path d="M${x} ${t + 4}l5 -4h${w - 7}l2 4V${b - 3}l-4 3h${-(w - 7)}l-3 -3z" fill="#ff0080" stroke="#160009" stroke-width="3"/>
    <path d="M${side} ${t + 8}h${s}V${b - 3}h${-s}z" fill="#a50d58"/>
    <path d="M${x + 2} ${t + 5}l4 -3h${w - 9}l2 3l-3 4h${-(w - 7)}z" fill="#b20a5e" stroke="#3a0420" stroke-width="1"/>
    <path d="M${darkLeft ? x + s : x + w - s} ${t + 9}V${b - 2}" stroke="#5c0830" stroke-width="2"/>`;
};
const hollow = ([x, t, b, w = 24]: Pile, stroke: string, halo: string) => svg`
  <path d="M${x} ${t + 6}l10 -6l${w - 10} 6V${b - 5}l-9 5h${-(w - 16)}l-7 -5z" fill="#fff" stroke="${halo}" stroke-width="7"/>
  <path d="M${x} ${t + 6}l10 -6l${w - 10} 6V${b - 5}l-9 5h${-(w - 16)}l-7 -5zM${x} ${t + 6}l8 6l${w - 8} -6M${x + 9} ${t + 12}V${b}" fill="#fff" stroke="${stroke}" stroke-width="3"/>`;

const VIEW_TOOLS: [string, string][] = [["detail", "Nivel de detalle"], ["shade", "Estilo visual"], ["sun", "Camino de sol"], ["shadow", "Sombras"], ["teapot", "Renderización"], ["crop", "Recortar vista"], ["cropShow", "Mostrar región de recorte"], ["lock3d", "Bloquear vista 3D"], ["glasses", "Ocultar temporalmente"], ["bulbOnly", "Mostrar elementos ocultos"], ["tempView", "Propiedades temporales"], ["analytic", "Modelo analítico"], ["displace", "Conjunto de desplazamiento"], ["constraints", "Mostrar restricciones"]];

@customElement("model-view")
class ModelView extends LitElement {
  static styles = [base, css`
    :host { display: flex; flex-direction: column; min-width: 0; min-height: 0; background: #ececec; padding: 0 0 3px 0; }
    .tabs { height: 20px; background: #cacaca; display: flex; align-items: center; justify-content: space-between; padding: 0 8px 0 1px; }
    .tab { height: 20px; width: 179px; background: #fff; display: flex; align-items: center; gap: 8px; padding-left: 5px; font-weight: bold; font-size: 11px; color: #333; }
    .body { flex: 1; min-height: 0; display: flex; padding: 0 4px 0 2px; }
    .canvas { flex: 1; min-width: 0; position: relative; background: #fff; overflow: hidden; }
    .scene { display: block; width: 100%; height: 100%; }
    .vscroll { width: 16px; background: #f0f0f0; display: flex; flex-direction: column; align-items: center; padding: 5px 0 3px; }
    .vspace-a { flex: 378; } .vspace-b { flex: 372; }
    .vthumb { width: 16px; height: 17px; background: #cdcdcd; }
    .nav { position: absolute; right: 2px; top: 149px; width: 35px; height: 116px; border: 2px solid #bdbdbd; border-radius: 5px; background: #f3f3f3; display: flex; flex-direction: column; align-items: center; justify-content: space-between; padding: 2px 0; }
    .nav .edge { align-self: flex-end; margin-right: 2px; }
    .nav .rule { width: 26px; border-top: 1px solid #bbb; }
    .controls { height: 15px; display: flex; align-items: center; padding: 0 9px 0 2px; background: #f0f0f0; margin-left: 2px; }
    .scale { width: 76px; height: 15px; padding-left: 4px; }
    .tool { width: 21px; height: 15px; }
    .hback { padding-left: 3px; }
    .hspace { flex: 1; }
    .hthumb { width: 17px; height: 15px; background: #cdcdcd; }
    .grip { margin-left: 5px; }
    .cube { font: 6px "Liberation Sans", Arial, sans-serif; fill: #888; }
  `];

  render() {
    return html`
      <div class="tabs">
        <div class="tab">${icon("house")}<span>Entibaciones - Faltante</span><button aria-label="Cerrar vista">${cross}</button></div>
        <button aria-label="Lista de vistas">${tabMenu}</button>
      </div>
      <div class="body">
        <div class="canvas">
          <svg class="scene" viewBox="346 192 610 805" preserveAspectRatio="xMidYMin meet" role="img" aria-label="Modelo 3D de entibaciones">
            ${this.scene()}${this.viewCube()}
            <path d="M597.500 406.500v16l4-3.500 3 6 2-1-3-5.500h5.500z" fill="#fff" stroke="#222" />
          </svg>
          <div class="nav">
            <svg class="ic edge" width="8" height="8" viewBox="0 0 8 8" aria-hidden="true"><circle cx="4" cy="4" r="3.500" fill="#aaa" /><path d="M2.500 2.500l3 3m0-3l-3 3" stroke="#fff" /></svg>
            <button aria-label="Rueda de navegación"><svg class="ic" width="24" height="24" viewBox="0 0 24 24"><path d="M12 1h10.500v11a10.500 10.500 0 1 1-10.500-11z" fill="#f0f0f0" stroke="#999" /><circle cx="12" cy="12" r="7.500" fill="none" stroke="#999" /><circle cx="12" cy="12" r="4.500" fill="#fff" stroke="#999" /><path d="M6.500 17l2-2M17.500 17l-2-2" stroke="#999" /></svg></button>
            <svg class="ic" width="5" height="3" viewBox="0 0 5 3" aria-hidden="true"><path d="M0 0h5L2.500 3z" fill="#888" /></svg>
            <span class="rule"></span>
            <button aria-label="Zoom"><svg class="ic" width="17" height="17" viewBox="0 0 17 17"><rect x=".5" y=".5" width="11" height="11" fill="#b5d3a3" stroke="#8fae7c" /><circle cx="10.500" cy="10.500" r="3.500" fill="#eee" stroke="#999" /><path d="M13 13l3 3" stroke="#999" stroke-width="2" /></svg></button>
            <svg class="ic" width="5" height="3" viewBox="0 0 5 3" aria-hidden="true"><path d="M0 0h5L2.500 3z" fill="#888" /></svg>
            <svg class="ic edge" width="8" height="8" viewBox="0 0 8 8" aria-hidden="true"><circle cx="4" cy="4" r="3.400" fill="#fff" stroke="#aaa" /><path d="M2 4h4" stroke="#999" /></svg>
          </div>
        </div>
        <div class="vscroll">${chevron("up")}<span class="vspace-a"></span><span class="vthumb"></span><span class="vspace-b"></span>${chevron("down")}</div>
      </div>
      <div class="controls">
        <button class="scale">1 : 25</button>
        ${VIEW_TOOLS.map(([n, label]) => html`<button class="tool" aria-label=${label}>${icon(n)}</button>`)}
        <span class="tool hback">${chevron("left")}</span>
        <span class="hspace"></span><span class="hthumb"></span><span class="hspace"></span>${chevron("right")}
        <svg class="ic grip" width="9" height="9" viewBox="0 0 9 9" aria-hidden="true"><path d="M6 0h2v2H6zM3 3h2v2H3zM6 3h2v2H6zM0 6h2v2H0zM3 6h2v2H3zM6 6h2v2H6z" fill="#bbb" /></svg>
      </div>
    `;
  }

  private scene() {
    return svg`<g transform="translate(420 440) scale(.3333)" fill="none">
      ${BACK.map(([x, t, b, w]) => solid([x + RIGHT, t, b, w], false))}
      <path d="M1258 310v44M1262 308v42M1304 336v90M1300 332v90M1351 362v98M1396 390v100" stroke="#12000a" stroke-width="5"/>
      <path d="M880 147l18 3M924 172l18 3M970 194l18 3M1198 328h18M1242 354l20 3M1288 382l18 3M1332 402h18M1332 450h18M1378 416h18M1378 462h18" stroke="#160009" stroke-width="3"/>
      <g stroke="#bfbfbf" stroke-width="3" stroke-linejoin="round">
        <path d="M788 160l27 -12l405 232q30 14 60 22q60 14 108 44l70 34q20 10 16 34l-30 8q-4 -18 -18 -24l-72 -36q-50 -28 -84 -34q-30 -4 -68 18l-64 32l-28 -14v-16l88 -52l-24 -14L806 172z" fill="#fff"/>
        <path d="M812 160l383 220M1110 452l28 12l64 -34q46 -26 84 -14q40 10 86 38l60 34M1138 464v14M932 236l18 -10M1392 470l-18 10v30l14 6"/>
        ${SLABS.map((s) => svg`<path d="${slabPath(s)}" fill="#fff"/>`)}
        <path d="M545 395l45 -26l50 32l-40 24zM557 396l44 28M568 388l44 28M580 380l44 28M560 404l46 -26M574 410l44 -26M588 418l42 -24M568 412v26M576 414v28M584 416v26M853 388l30 -28l32 36l-34 28M880 364v70M895 385l34 6l-22 20z"/>
        <path d="M212 545l34 50M222 540l30 52M192 742l22 50M200 738l22 50M200 788v22h20"/>
      </g>
      ${LEFT.map((p) => solid(p, true))}
      ${FRONT.map((p) => solid(p, p[0] < 1200))}
      ${ORANGE.map((p) => hollow(p, "#e0824e", "#fff1e6"))}
      ${GREEN.map((p) => hollow(p, "#1fd01f", "#dcfcdc"))}
    </g>`;
  }

  private viewCube() {
    return svg`
      <defs><radialGradient id="soft"><stop offset="0" stop-color="#8a8a8a"/><stop offset="1" stop-color="#fff" stop-opacity="0"/></radialGradient></defs>
      <ellipse cx="878" cy="294" rx="55" ry="36" fill="#f1f1f1" stroke="#c4c4c4"/>
      <ellipse cx="878" cy="292" rx="42" ry="27" fill="#fff" stroke="#c4c4c4"/>
      <ellipse cx="878" cy="294" rx="38" ry="18" fill="url(#soft)"/>
      <path d="M841 269l-6 4 7 2M912 267l6 3-8 3M831 316q4-8 9-4t6-2M831 316l9-1M909 315l8-6 7 6-8 6z" stroke="#aaa" fill="#eee"/>
      <path d="M848 253.500l30-14.500 30 14-30 17z" fill="#f2f2f2" stroke="#999"/>
      <path d="M848 253.500l30 16.500v36l-28-20z" fill="#e8e8e8" stroke="#999"/>
      <path d="M878 270l30-17-2 33-28 20z" fill="#dedede" stroke="#999"/>
      <path d="M878 270v36" stroke="#777" stroke-width="1.500"/>
      <text class="cube" transform="translate(863 251) rotate(27)">SUPERIOR</text>
      <text class="cube" transform="translate(850 275) rotate(32)">FRONTAL</text>
      <text class="cube" transform="translate(882 292) rotate(-34)">DERECHA</text>`;
  }
}

/* ---------- schedule view ---------- */

const SCHEDULE: (string[] | null)[] = [
  null,
  ["Base Pila 29 a 49", "Pila 60x90", "53.36 m³", "12.58"],
  ["Base Pila 29 a 49", "Pila 80", "27.66 m³", "6.52"],
  null,
  ["Base Pila 1y2", "Pila 60x90", "7.09 m³", "1.67"],
  null,
  ["Base Pila 19 a 28", "Pila 60x90", "46.39 m³", "10.93"],
  null,
  ["Base Pila 3 a 5", "Pila 60x90", "53.09 m³", "12.51"],
];

@customElement("schedule-view")
class ScheduleView extends LitElement {
  static styles = [base, css`
    :host { display: flex; flex-direction: column; min-width: 0; min-height: 0; background: #ececec; border-left: 1px solid #c4c4c4; padding: 0 2px 3px 0; }
    .tabs { height: 20px; background: #cacaca; display: flex; align-items: center; justify-content: space-between; padding-right: 6px; }
    .tab { height: 20px; width: 170px; background: #eeeeee; display: flex; align-items: center; gap: 8px; padding-left: 4px; color: #444; }
    .sheet { flex: 1; min-height: 0; background: #cfcfcf; border-top: 2px solid #eee; padding-left: 1px; font: 11px "Liberation Sans", Arial, sans-serif; color: #111; }
    table { border-collapse: collapse; table-layout: fixed; width: 384px; border-left: 1px solid #000; }
    .first { width: 95px; }
    th, td { padding: 0; height: 16px; line-height: 14px; text-align: left; white-space: nowrap; }
    .title { height: 40px; background: #ff0080; border: 1px solid #000; text-align: center; font-weight: normal; font-size: 12px; color: #3c0020; }
    .letters th { height: 15px; line-height: 13px; background: #f0f0f0; text-align: center; font-weight: bold; font-size: 12px; border-left: 1px solid #000; border-right: 1px solid #000; border-bottom: 2px solid #000; }
    .fields th { background: #fff; text-align: center; font-weight: normal; border: 1px solid #000; border-width: 1px 0; border-right: 1px dotted #777; }
    .data td { background: #fff; padding-left: 2px; border: 1px solid #000; border-width: 1px 0; border-right: 1px dotted #777; }
    .data.leads td { border-bottom: 1px dotted #777; }
    .data.joined td { border-top: 1px dotted #777; }
    .fields th:last-child, .data td:last-child { border-right: 1px solid #000; }
    .total td { padding-left: 2px; }
  `];

  render() {
    return html`
      <div class="tabs">
        <div class="tab">${icon("sheetTable")}<span>Entibaciones - Faltante</span></div>
        <button aria-label="Lista de vistas">${tabMenu}</button>
      </div>
      <div class="sheet">
        <table>
          <colgroup><col class="first" /><col /><col /><col /></colgroup>
          <thead>
            <tr><th class="title" colspan="4">&lt;Entibaciones - Faltante&gt;</th></tr>
            <tr class="letters">${["A", "B", "C", "D"].map((l) => html`<th>${l}</th>`)}</tr>
            <tr class="fields">${["Nivel base", "Tipo original", "Volumen", "%Faltante"].map((l) => html`<th scope="col">${l}</th>`)}</tr>
          </thead>
          <tbody>
            ${SCHEDULE.map((r, i) => r
              ? html`<tr class=${classMap({ data: true, joined: !!SCHEDULE[i - 1], leads: !!SCHEDULE[i + 1] })}>${r.map((c) => html`<td>${c}</td>`)}</tr>`
              : html`<tr><td colspan="4"></td></tr>`)}
            <tr class="total"><td colspan="2">Total general: 49</td><td>187.59 m³</td><td>44.21</td></tr>
          </tbody>
        </table>
      </div>
    `;
  }
}

/* ---------- project browser ---------- */

interface Node { depth: number; text: string; box?: "+" | "-"; art?: string; bold?: boolean; picked?: boolean; }

const TREE: Node[] = [
  { depth: 0, text: "Vistas (I-BIM)", box: "-", art: "views" },
  { depth: 1, text: "???", box: "-" },
  { depth: 2, text: "Planos de planta", box: "-" },
  { depth: 3, text: "???", box: "+" },
  { depth: 2, text: "Vistas 3D", box: "-" },
  { depth: 3, text: "???", box: "-" },
  { depth: 4, text: "{3D}" },
  { depth: 3, text: "Entibaciones", box: "-" },
  { depth: 4, text: "Entibaciones - Faltante", bold: true },
  { depth: 3, text: "Fundaciones", box: "-" },
  { depth: 4, text: "Fundaciones - Faltante" },
  { depth: 4, text: "Fundaciones - Programado" },
  { depth: 4, text: "Fundaciones - Terminado" },
  { depth: 1, text: "Calculo", box: "-" },
  { depth: 2, text: "Planos estructurales", box: "+" },
  { depth: 2, text: "Vistas 3D", box: "+" },
  { depth: 2, text: "Alzados (Alzado de edificio)", box: "+" },
  { depth: 0, text: "Leyendas", art: "legend" },
  { depth: 0, text: "Tablas de planificación/Cantidades (Tablas IBIM)", box: "-", art: "schedule" },
  { depth: 1, text: "???", box: "-" },
  { depth: 2, text: "Cómputo de materiales de multicategoría" },
  { depth: 2, text: "Cómputo de materiales de pieza" },
  { depth: 1, text: "Entibaciones", box: "-" },
  { depth: 2, text: "Entibaciones - Faltante", picked: true },
  { depth: 1, text: "Fundaciones", box: "-" },
  { depth: 2, text: "Fundaciones - Faltante" },
  { depth: 2, text: "Fundaciones - Programado" },
  { depth: 2, text: "Fundaciones - Terminado" },
  { depth: 0, text: "Planos (Planos - I-BIM)", art: "sheets" },
  { depth: 0, text: "Familias", box: "+", art: "families" },
  { depth: 0, text: "Grupos", box: "+", art: "groups" },
  { depth: 0, text: "Vínculos de Revit", art: "links" },
];

const hasNext = (i: number, depth: number) => {
  for (let j = i + 1; j < TREE.length; j++) {
    if (TREE[j].depth < depth) return false;
    if (TREE[j].depth === depth) return true;
  }
  return false;
};

@customElement("project-browser")
class ProjectBrowser extends LitElement {
  static styles = [base, css`
    :host { display: flex; flex-direction: column; min-height: 0; background: #fff; }
    .head { height: 20px; background: #eeeeee; display: flex; align-items: center; justify-content: space-between; padding: 0 3px 0 4px; color: #333; }
    ul { list-style: none; margin: 0; padding: 0; }
    li { height: 18px; display: flex; align-items: center; white-space: nowrap; }
    .label { height: 18px; line-height: 18px; padding: 0 3px; color: #111; }
    .rooted { margin-left: 3px; }
    .bold { font-weight: bold; }
    .picked { background: #e3e3e3; }
  `];

  private guides(n: Node, i: number) {
    const w = n.depth ? n.depth * 20 + 25 : 22;
    const c = n.depth * 20 + 10;
    const d: string[] = [];
    for (let k = 0; k < n.depth; k++) if (hasNext(i, k)) d.push(`M${k * 20 + 10}.5 0V18`);
    if (i > 0) d.push(`M${c}.5 0V10`);
    if (hasNext(i, n.depth)) d.push(`M${c}.5 10V18`);
    d.push(`M${c} 10.500H${w - 1}`);
    return html`<svg class="ic" width=${w} height="18" viewBox="0 0 ${w} 18" aria-hidden="true">
      <path d=${d.join("")} stroke="#8c8c8c" stroke-dasharray="1 1" fill="none" />
      ${n.box ? svg`<rect x="${c - 4 + 0.5}" y="6.500" width="8" height="8" rx="1" fill="#fafafa" stroke="#8f8f8f"/><path d="M${c - 1.5} 10.500h4${n.box === "+" ? "M" + (c + 0.5) + " 8.500v4" : ""}" stroke="#3b4a9c"/>` : nothing}
    </svg>`;
  }

  render() {
    return html`
      <div class="head"><span>Navegador de proyectos - SO_IBIM_Calculo</span><button aria-label="Cerrar navegador">${cross}</button></div>
      <ul>
        ${TREE.map((n, i) => html`<li>${this.guides(n, i)}${n.art ? icon(n.art) : nothing}<span class=${classMap({ label: true, rooted: !!n.art, bold: !!n.bold, picked: !!n.picked })}>${n.text}</span></li>`)}
      </ul>
    `;
  }
}

/* ---------- application frame ---------- */

const QUICK: string[] = ["logo", "recent", "_", "open", "save", "sync", ">", "undo", ">", "redo", ">", "print", "|", "measure", ">", "dim", "tag", "textA", "|", "house", ">", "section", "thin", "|", "closeWin", "switchWin", ">", "menu"];

interface Tool { art: string; lines: string[]; w: number; drop?: "below" | "side"; off?: boolean; }
interface Panel { title: string; w: number; lead: number; tools: Tool[]; small?: { art: string; text: string; off?: boolean }[]; more?: boolean; }

const PANELS: Panel[] = [
  { title: "Construir", w: 648, lead: 4, tools: [
    { art: "wall", lines: ["Muro"], w: 47, drop: "below" },
    { art: "door", lines: ["Puerta"], w: 44 },
    { art: "window", lines: ["Ventana"], w: 46 },
    { art: "component", lines: ["Componente"], w: 94, drop: "below" },
    { art: "column", lines: ["Pilar"], w: 42, drop: "below" },
    { art: "roof", lines: ["Cubierta"], w: 74, drop: "below" },
    { art: "ceiling", lines: ["Techo"], w: 30 },
    { art: "floor", lines: ["Suelo"], w: 60, drop: "below" },
    { art: "curtain", lines: ["Sistema de", "muro cortina"], w: 68 },
    { art: "grid", lines: ["Rejilla de", "muro cortina"], w: 80 },
    { art: "mullion", lines: ["Montante"], w: 56 },
  ] },
  { title: "Circulación", w: 171, lead: 2, tools: [
    { art: "railing", lines: ["Barandilla"], w: 76, drop: "below" },
    { art: "ramp", lines: ["Rampa"], w: 40 },
    { art: "stair", lines: ["Escalera"], w: 52 },
  ] },
  { title: "Modelo", w: 183, lead: 3, tools: [
    { art: "modelText", lines: ["Texto", "modelado"], w: 60 },
    { art: "modelLine", lines: ["Línea de", "modelo"], w: 51 },
    { art: "modelGroup", lines: ["Grupo de", "modelo"], w: 68, drop: "side" },
  ] },
  { title: "Habitación y área", w: 395, lead: 0, more: true, tools: [
    { art: "room", lines: ["Habitación"], w: 70, off: true },
    { art: "roomSep", lines: ["Separador", "de habitación"], w: 72 },
    { art: "roomTag", lines: ["Etiquetar", "habitación"], w: 80, drop: "side" },
    { art: "area", lines: ["Área"], w: 46, drop: "below" },
    { art: "areaOff", lines: ["Contorno", "de área"], w: 53, off: true },
    { art: "areaTag", lines: ["Etiquetar", "área"], w: 73, drop: "side" },
  ] },
  { title: "Hueco", w: 175, lead: 0, tools: [
    { art: "byFace", lines: ["Por", "cara"], w: 42 },
    { art: "shaft", lines: ["Agujero"], w: 46 },
  ], small: [{ art: "wallOpening", text: "Muro" }, { art: "vertical", text: "Vertical" }, { art: "dormer", text: "Buhardilla" }] },
  { title: "Referencia", w: 68, lead: 4, tools: [], small: [{ art: "level", text: "Nivel", off: true }, { art: "axis", text: "Rejilla", off: true }] },
  { title: "Plano de trabajo", w: 180, lead: 0, tools: [
    { art: "setPlane", lines: ["Definir"], w: 46 },
  ], small: [{ art: "showPlane", text: "Mostrar" }, { art: "refPlane", text: "Plano de referencia", off: true }, { art: "viewer", text: "Visor" }] },
];

const TABS = ["Arquitectura", "Estructura", "Acero", "Prefabricado", "Sistemas", "Insertar", "Anotar", "Analizar", "Masa y emplazamiento", "Colaborar", "Vista", "Gestionar", "Complementos", "Enscape™", "Modificar"];

@customElement("app-root")
class AppRoot extends LitElement {
  @state() private active = TABS[0];
  @state() private exclude = true;

  static styles = [base, css`
    :host { display: flex; flex-direction: column; height: 100vh; overflow: hidden; background: #cacaca; color: #111; font: 11px/14px "Open Sans", "Noto Sans", sans-serif; }
    .title { height: 28px; display: grid; grid-template-columns: 5fr auto 4fr; align-items: start; color: #333; }
    .quick, .account { display: flex; align-items: center; height: 23px; }
    .quick button, .account button { width: 24px; height: 22px; }
    .quick .drop, .account .drop { width: 12px; }
    .quick .custom { width: 16px; }
    .space { width: 5px; }
    .sep { width: 7px; height: 20px; display: flex; justify-content: center; }
    .sep::before { content: ""; border-left: 1px solid #bdbdbd; }
    .doc { padding-top: 2px; font-size: 12px; }
    .account { justify-content: flex-end; }
    .account .sign { width: auto; gap: 5px; padding: 0 15px 0 4px; }
    .account .cart { margin-left: 2px; }
    .account .win { width: 25px; }
    .wingap { width: 54px; }
    .tabs { height: 20px; display: flex; align-items: stretch; font-size: 12px; color: #333; }
    .tabs button { padding: 0 8px; line-height: 20px; }
    .tabs .file { width: 59px; background: #2a78b5; color: #fff; margin-right: 3px; }
    .tabs .on { background: #eeeeee; color: #111; padding: 0 9px; margin-right: 2px; }
    .tabs .state { gap: 4px; margin-left: 20px; }
    .ribbon { height: 96px; display: flex; background: #eeeeee; border-bottom: 1px solid #c6c6c6; color: #222; }
    .panel { display: flex; flex-direction: column; border-right: 1px solid #d9d9d9; flex: none; }
    .panel:last-child { border-right: 0; }
    .tools { flex: 1; display: flex; padding-top: 5px; }
    .tool { flex: none; flex-direction: column; justify-content: flex-start; align-items: center; height: 72px; position: relative; }
    .tool .lines { display: flex; flex-direction: column; align-items: center; line-height: 15px; margin-top: 4px; }
    .tool .below { height: 13px; display: flex; align-items: center; padding-bottom: 3px; }
    .tool .side { position: absolute; right: 3px; top: 53px; }
    .modify { width: 57px; margin-left: 15px; background: linear-gradient(#c6dff6, #a9cef0); border: 1px solid #2a78b5; margin-top: -2px; }
    .modify .lines { margin-top: 5px; }
    .select { width: 86px; padding-top: 0; }
    .small { display: flex; flex-direction: column; justify-content: center; gap: 8px; padding-bottom: 4px; }
    .small button { gap: 5px; height: 16px; justify-content: flex-start; }
    .name { height: 18px; display: flex; align-items: center; justify-content: center; gap: 7px; padding-bottom: 2px; }
    .off { color: #a9a9a9; }
    .options { height: 26px; background: #eeeeee; }
    main { flex: 1; min-height: 0; border-top: 2px solid #cacaca; display: grid; grid-template-columns: 344px minmax(0, 1fr) minmax(0, 1fr) 312px; grid-template-rows: minmax(0, 1fr); }
    .status { height: 21px; display: flex; align-items: center; background: #cacaca; padding: 4px 0 0 1px; }
    .msg { width: 892px; }
    .box { position: relative; height: 17px; }
    .box select { appearance: none; width: 100%; height: 100%; background: #fff; border: 0; border-radius: 0; padding: 0 20px 0 4px; }
    .box .ic { position: absolute; right: 1px; top: 3px; }
    .sets { width: 204px; margin-left: 8px; }
    .design { width: 205px; margin-left: 3px; }
    .f1 { margin-left: 9px; display: flex; gap: 3px; width: 47px; }
    .opt { width: 26px; }
    .check { display: flex; align-items: center; gap: 3px; margin-left: 9px; }
    .check input { appearance: none; width: 14px; height: 14px; background: #fff; border: 1px solid #444; display: grid; place-items: center; }
    .check input:checked::before { content: ""; width: 9px; height: 4px; border: solid #2e9a35; border-width: 0 0 2px 2px; transform: translateY(-1px) rotate(-45deg); }
    .picks { margin-left: auto; display: flex; align-items: center; padding-right: 71px; }
    .picks button { width: 26px; }
    .picks .last { width: auto; padding-left: 3px; gap: 2px; }
  `];

  private quick(k: string) {
    if (k === "|") return html`<span class="sep"></span>`;
    if (k === "_") return html`<span class="space"></span>`;
    if (k === ">") return html`<button class="drop" aria-label="Más">${smallArrow}</button>`;
    if (k === "menu") return html`<button class="custom" aria-label="Personalizar">${tabMenu}</button>`;
    return html`<button aria-label=${k}>${icon(k)}</button>`;
  }

  private tool(t: Tool) {
    return html`<button class=${classMap({ tool: true, off: !!t.off })} style="width:${t.w}px">
      ${icon(t.art, 32)}
      <span class="lines">${t.lines.map((l) => html`<span>${l}</span>`)}</span>
      ${t.drop ? html`<span class=${t.drop}>${smallArrow}</span>` : nothing}
    </button>`;
  }

  render() {
    return html`
      <header class="title">
        <div class="quick">${QUICK.map((k) => this.quick(k))}</div>
        <div class="doc">Autodesk Revit 2022 - SO_IBIM_Calculo - Vista 3D: Entibaciones - Faltante</div>
        <div class="account">
          <svg class="ic" width="4" height="7" viewBox="0 0 4 7" aria-hidden="true"><path d="M4 0v7L0 3.500z" fill="#333" /></svg>
          <button aria-label="Buscar">${icon("binoc")}</button>
          <button class="sign">${icon("user")}Iniciar sesión</button>
          <button class="drop" aria-label="Cuenta">${smallArrow}</button>
          <button class="cart" aria-label="App Store">${icon("cart")}</button>
          <span class="sep"></span>
          <button aria-label="Ayuda">${icon("help")}</button>
          <button class="drop" aria-label="Más ayuda">${smallArrow}</button>
          <span class="wingap"></span>
          <button class="win" aria-label="Minimizar"><svg class="ic" width="12" height="12" viewBox="0 0 12 12"><path d="M2 10.500h8" stroke="#222" stroke-width="2" /></svg></button>
          <button class="win" aria-label="Restaurar"><svg class="ic" width="12" height="12" viewBox="0 0 12 12"><path d="M4 4V1h7v6H8M1 5h7v5.500H1z" stroke="#222" fill="none" stroke-width="1.500" /></svg></button>
          <button class="win" aria-label="Cerrar"><svg class="ic" width="12" height="12" viewBox="0 0 12 12"><path d="M1 1l10 10M11 1L1 11" stroke="#222" stroke-width="2" /></svg></button>
        </div>
      </header>
      <nav class="tabs">
        <button class="file">Archivo</button>
        ${TABS.map((t) => html`<button class=${classMap({ on: t === this.active })} @click=${() => (this.active = t)}>${t}</button>`)}
        <button class="state" aria-label="Minimizar cinta"><svg class="ic" width="16" height="10" viewBox="0 0 16 10"><rect x=".5" y=".5" width="14" height="8" rx="3" fill="#eee" stroke="#333" /><path d="M5 6.500h5L7.500 3z" fill="#333" /></svg>${smallArrow}</button>
      </nav>
      <section class="ribbon">
        <div class="panel select">
          <div class="tools"><button class="tool modify">${icon("cursor", 32)}<span class="lines"><span>Modificar</span></span></button></div>
          <div class="name">Seleccionar ${arrow}</div>
        </div>
        ${PANELS.map((p) => html`<div class="panel" style="width:${p.w}px">
          <div class="tools">
            <span style="width:${p.lead}px"></span>
            ${p.tools.map((t) => this.tool(t))}
            ${p.small ? html`<div class="small">${p.small.map((s) => html`<button class=${classMap({ off: !!s.off })}>${icon(s.art)}${s.text}</button>`)}</div>` : nothing}
          </div>
          <div class="name">${p.title}${p.more ? arrow : nothing}</div>
        </div>`)}
      </section>
      <div class="options"></div>
      <main>
        <property-palette></property-palette>
        <model-view></model-view>
        <schedule-view></schedule-view>
        <project-browser></project-browser>
      </main>
      <footer class="status">
        <span class="msg">Clic para seleccionar, TAB para alternar, CTRL para añadir y MAYÚS para anular una selección.</span>
        ${icon("workset")}
        <div class="box sets"><select aria-label="Subproyecto activo"><option></option></select>${thinChevron}</div>
        <span class="f1">${icon("filterOff")}:0</span>
        <button class="opt" aria-label="Opciones de diseño">${icon("options")}</button>
        <button class="opt" aria-label="Elegir opción">${icon("pick")}</button>
        <div class="box design"><select aria-label="Opción activa"><option>Modelo base</option></select>${thinChevron}</div>
        <label class="check"><input type="checkbox" .checked=${this.exclude} @change=${(e: Event) => (this.exclude = (e.target as HTMLInputElement).checked)} />Excluir opciones</label>
        <div class="picks">
          ${["selLinks", "selUnder", "selPin", "selFace", "selDrag", "background"].map((k) => html`<button aria-label=${k}>${icon(k)}</button>`)}
          <button class="last">${icon("filter")}:0</button>
        </div>
      </footer>
    `;
  }
}
